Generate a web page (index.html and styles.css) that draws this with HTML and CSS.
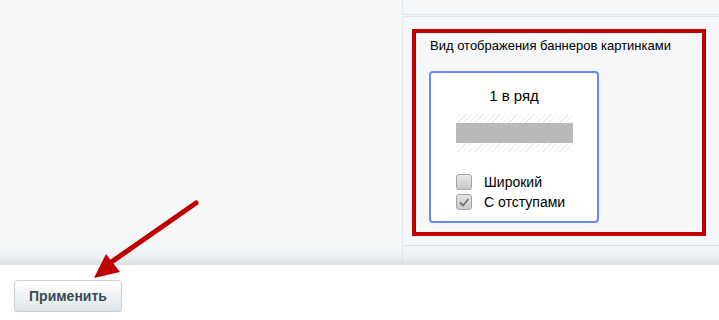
FILE: index.html
```html
<!DOCTYPE html>
<html lang="ru">
<head>
  <meta charset="UTF-8" />
  <title>Настройки баннеров</title>
  <meta name="viewport" content="width=device-width, initial-scale=1" />
  <link rel="stylesheet" href="styles.css">
</head>
<body>
  <div class="workarea">
    <div class="col-left"></div>
    <div class="col-right">
      <div class="top-box"></div>
      <div class="settings">
        <div class="highlight">
          <div class="field-title">Вид отображения баннеров картинками</div>
          <div class="variant">
            <div class="variant-name">1 в ряд</div>
            <div class="preview">
              <div class="hatch"></div>
              <div class="bar"></div>
              <div class="hatch"></div>
            </div>
            <label class="check"><span class="box"></span>Широкий</label>
            <label class="check"><span class="box checked">
              <svg width="14" height="14" viewBox="0 0 14 14"><path d="M3 7.5 L6 10.5 L11.5 4" fill="none" stroke="#6f7478" stroke-width="1.8"/></svg>
            </span>С отступами</label>
          </div>
        </div>
      </div>
    </div>
  </div>
  <div class="band">
    <div class="band-left"></div>
    <div class="band-right"></div>
  </div>

  <div class="footer">
    <button class="btn">Применить</button>
  </div>

  <!-- стрелка-указатель -->
  <svg class="arrow" width="719" height="320" viewBox="0 0 719 320">
    <path d="M196 203 L110 263" stroke="#c00000" stroke-width="5" stroke-linecap="round"/>
    <polygon points="94,278 106,254 120,272" fill="#c00000"/>
  </svg>
</body>
</html>
```

FILE: styles.css
```css
body { margin: 0; font-family: "Liberation Sans", Arial, sans-serif; font-size: 13px; color: #000; background: #fff; }
.workarea { display: flex; height: 246px; background: #f5f7f8; }
.col-left { width: 402px; }
.col-right { flex: 1; display: flex; flex-direction: column; }
.top-box { height: 14px; border-left: 1px solid #dfe6ea; border-bottom: 1px solid #dfe6ea; border-bottom-left-radius: 3px; }
.settings {
  flex: 1;
  margin-top: 1px;
  border-left: 1px solid #dfe6ea;
  border-top: 1px solid #dfe6ea;
  border-bottom: 1px solid #d6e0e6;
  border-top-left-radius: 3px;
  padding: 12px 0 0 9px;
}
.highlight { width: 286px; height: 199px; border: 4px solid #c00000; }
.field-title { padding: 5px 0 0 14px; line-height: 16px; font-size: 13px; }
.variant {
  margin: 17px 0 0 13px;
  width: 166px;
  height: 148px;
  border: 2px solid #6888ff;
  border-radius: 4px;
  background: #fff;
  box-sizing: content-box;
}
.variant-name { text-align: center; padding-top: 14px; line-height: 18px; font-size: 15px; }
.preview { margin: 9px 0 0 25px; width: 117px; }
.hatch {
  height: 9px;
  background: repeating-linear-gradient(135deg, #fff 0 3px, #ececec 3px 4px);
}
.bar { height: 20px; background: #b9b9b9; }
.check { display: flex; align-items: center; margin-left: 25px; height: 20px; line-height: 16px; font-size: 14px; }
.preview + .check { margin-top: 20px; }
.box {
  width: 14px; height: 14px;
  border: 1px solid #9ea3a6;
  border-radius: 3px;
  background: linear-gradient(#e8e9ea, #c4c7c9);
  margin-right: 12px;
  display: flex; align-items: center; justify-content: center;
}
.box.checked { background: linear-gradient(#e3e4e5, #c9cccd); }
.band { display: flex; height: 19px; background: linear-gradient(#f4f7f8, #eef2f4 50%, #d8e1e6); }
.band-left { width: 402px; }
.band-right { flex: 1; border-left: 1px solid #dbe3e8; }
.footer { padding: 15px 0 0 14px; }
.btn {
  width: 108px; height: 32px;
  font-family: "Liberation Sans", Arial, sans-serif;
  font-size: 14px; font-weight: bold; color: #3d4a55;
  border: 1px solid #c9d1d6;
  border-radius: 4px;
  background: linear-gradient(#ffffff, #dfe6ea);
  box-shadow: 0 1px 1px rgba(0,0,0,0.15);
}
.arrow { position: absolute; left: 0; top: 0; pointer-events: none; }
```
